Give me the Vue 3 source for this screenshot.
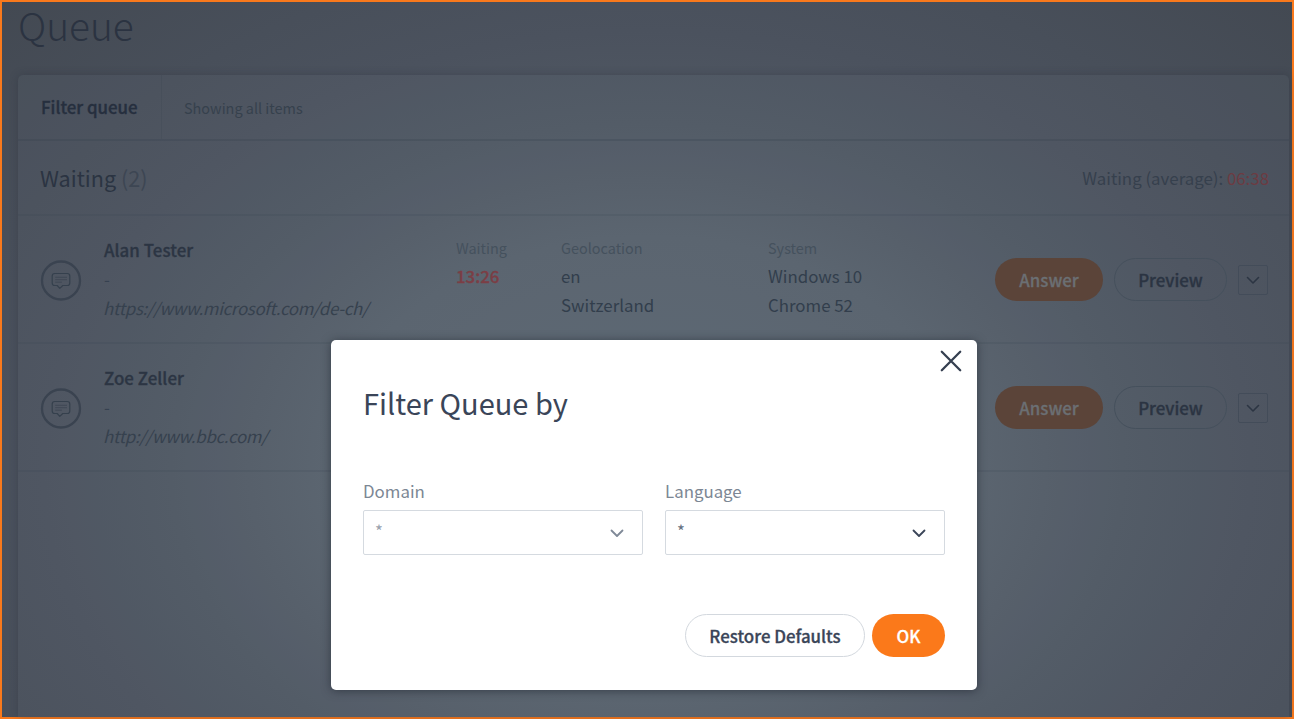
<script setup>
const rows = [
  {
    name: 'Alan Tester',
    note: '-',
    url: 'https://www.microsoft.com/de-ch/',
    details: { waiting: '13:26', geo: ['en', 'Switzerland'], system: ['Windows 10', 'Chrome 52'] },
  },
  { name: 'Zoe Zeller', note: '-', url: 'http://www.bbc.com/' },
]
const fields = [
  { label: 'Domain', value: '*', muted: true },
  { label: 'Language', value: '*', muted: false },
]
</script>

<template>
  <div class="screen">
    <h1 class="title">Queue</h1>
    <section class="panel">
      <div class="toolbar">
        <div class="filter"><span>Filter queue</span></div>
        <div class="showing">Showing all items</div>
      </div>
      <div class="heading">
        <h2>Waiting <span class="count">(2)</span></h2>
        <div class="average">Waiting (average): <span class="red">06:38</span></div>
      </div>
      <div v-for="r in rows" :key="r.name" class="row">
        <div class="badge">
          <svg width="42" height="42" viewBox="0 0 42 42" fill="none">
            <circle cx="21" cy="21.500" r="19" stroke="#3a4350" stroke-width="2.300" />
            <path d="M14.700 14.500h12.600q2.500 0 2.500 2.500v7q0 2.500-2.500 2.500h-4.500l-3 2.900-2.600-2.900h-2.500q-2.500 0-2.500-2.500v-7q0-2.500 2.500-2.500z" stroke="#35404d" stroke-width="1.200" stroke-linejoin="round" />
            <path d="M15.200 18.300h11.800M15.200 20.700h11.800M15.200 23.200h6.700" stroke="#3b4451" stroke-width=".8" />
          </svg>
        </div>
        <div class="visitor">
          <div class="name">{{ r.name }}</div>
          <div class="note">{{ r.note }}</div>
          <div class="url">{{ r.url }}</div>
        </div>
        <template v-if="r.details">
          <div class="col">
            <div class="label">Waiting</div>
            <div class="time">{{ r.details.waiting }}</div>
          </div>
          <div class="col">
            <div class="label">Geolocation</div>
            <div v-for="g in r.details.geo" :key="g" class="value">{{ g }}</div>
          </div>
          <div class="col">
            <div class="label">System</div>
            <div v-for="s in r.details.system" :key="s" class="value">{{ s }}</div>
          </div>
        </template>
        <div class="actions">
          <button class="pill answer"><span>Answer</span></button>
          <button class="pill preview"><span>Preview</span></button>
          <button class="more">
            <svg width="14" height="9" viewBox="0 0 14 9" fill="none"><path d="M1.500 1.500 7 7l5.500-5.500" stroke="#2c3543" stroke-width="1.600" stroke-linecap="round" stroke-linejoin="round" /></svg>
          </button>
        </div>
      </div>
    </section>

    <div class="dialog">
      <button class="close">
        <svg width="22" height="22" viewBox="0 0 22 22"><path d="M1.800 1.800 20.200 20.200M20.200 1.800 1.800 20.200" stroke="#353f50" stroke-width="2.300" stroke-linecap="round" /></svg>
      </button>
      <h3>Filter Queue by</h3>
      <div class="fields">
        <div v-for="f in fields" :key="f.label" class="field" :class="{ muted: f.muted }">
          <div class="field-label">{{ f.label }}</div>
          <div class="select">
            <span>{{ f.value }}</span>
            <svg width="14" height="9" viewBox="0 0 14 9" fill="none"><path d="M1.500 1.500 7 7l5.500-5.500" stroke="currentColor" stroke-width="1.800" stroke-linecap="round" stroke-linejoin="round" /></svg>
          </div>
        </div>
      </div>
      <div class="buttons">
        <button class="pill restore"><span>Restore Defaults</span></button>
        <button class="pill ok"><span>OK</span></button>
      </div>
    </div>
  </div>
</template>

<style>
html, body { margin: 0; overflow: hidden; }
</style>

<style scoped>
.screen {
  position: relative;
  box-sizing: border-box;
  width: 1294px;
  height: 719px;
  border: 2px solid #f9791c;
  padding: 0 3px 0 16px;
  display: flex;
  flex-direction: column;
  background: radial-gradient(ellipse 915px 662px at 645px 466px, #5d6773 0%, #58626d 35%, #505863 52%, #4b525e 66%, #484f5a 78%, #434952 100%);
  font-family: "Noto Sans CJK SC", "Noto Sans", sans-serif;
  font-size: 16.850px;
  line-height: 29px;
  color: #364150;
}
h1, h2, h3 { margin: 0; font-weight: 400; }
button { font: inherit; margin: 0; padding: 0; box-sizing: border-box; cursor: pointer; }
.title { height: 73px; flex: none; font-size: 38.800px; font-weight: 300; line-height: 45px; color: #2b3341; }
.panel {
  flex: 1;
  border-radius: 5px 5px 0 0;
  background: rgba(125, 140, 150, .08);
  box-shadow: 0 0 8px rgba(35, 41, 53, .3);
}
.toolbar, .heading, .row { box-sizing: border-box; display: flex; border-bottom: 2px solid rgba(50, 61, 75, .14); }
.toolbar { height: 66px; border-bottom-color: rgba(50, 61, 75, .24); }
.filter { box-sizing: border-box; width: 144px; padding-left: 23px; line-height: 64px; color: #262f3e; border-right: 1px solid rgba(50, 61, 75, .16); }
.filter, .name, .time, .pill { font-weight: 500; -webkit-text-stroke: .3px currentColor; }
.showing { padding-left: 22px; line-height: 66px; font-size: 14.450px; color: #36414d; }
.heading { height: 75px; padding: 0 20px 0 22px; justify-content: space-between; align-items: center; }
h2 { font-size: 21.600px; color: #2b3442; }
.count { color: #3d4653; }
.average { color: #36404d; }
.red { color: #6c3b42; }
.row { height: 128px; padding: 0 21px 0 22px; }
.badge { width: 64px; padding-top: 43px; }
.badge svg { display: block; }
.visitor { width: 352px; padding-top: 19px; }
.name { color: #2c3543; letter-spacing: .06px; }
.url { font-style: italic; letter-spacing: -.28px; color: #36414e; position: relative; left: -1px; }
.col { width: 105px; padding-top: 18px; }
.col + .col { width: 207px; }
.col + .col + .col { width: 200px; }
.label { font-size: 14.450px; line-height: 27px; color: #45515d; }
.value { color: #323e4c; }
.time { color: #7b3e45; }
.actions { margin-left: auto; display: flex; gap: 11px; padding-top: 42px; }
.pill { height: 43px; border-radius: 22px; border: 0; background: none; }
.pill span { position: relative; top: -.5px; }
.answer { width: 108px; background: #5b4439; color: #6b6f73; }
.preview { width: 113px; border: 1px solid #45505c; color: #2b3442; }
.more { width: 30px; height: 30px; margin-top: 7px; border: 1px solid #434c59; border-radius: 2px; background: none; display: grid; place-items: center; }
.dialog {
  position: absolute;
  left: 329px;
  top: 338px;
  width: 646px;
  height: 350px;
  box-sizing: border-box;
  padding: 40px 32px 0;
  border-radius: 5px;
  background: #fff;
  box-shadow: 0 1px 10px rgba(30, 36, 46, .6);
  color: #3a4558;
}
.close { position: absolute; right: 15px; top: 10px; width: 22px; height: 22px; border: 0; background: none; }
.close svg { display: block; }
h3 { font-size: 29px; line-height: 44px; }
.fields { display: flex; gap: 22px; margin-top: 52px; }
.field { width: 280px; }
.field-label { color: #7c8794; }
.select { box-sizing: border-box; height: 45px; margin-top: 5px; border: 1px solid #d5dae0; border-radius: 2px; padding: 0 18px 0 11px; display: flex; justify-content: space-between; align-items: center; color: #3a4558; }
.select svg { margin-top: 1px; }
.select span { padding-bottom: 5px; color: #667181; }
.muted .select { color: #7f8997; }
.muted .select span { color: #9aa3ae; }
.buttons { display: flex; justify-content: flex-end; gap: 7px; margin-top: 59px; }
.restore { width: 180px; border: 1px solid #d3d8de; color: #3a4558; }
.ok { width: 73px; background: #fb791a; color: #fff; }
</style>
